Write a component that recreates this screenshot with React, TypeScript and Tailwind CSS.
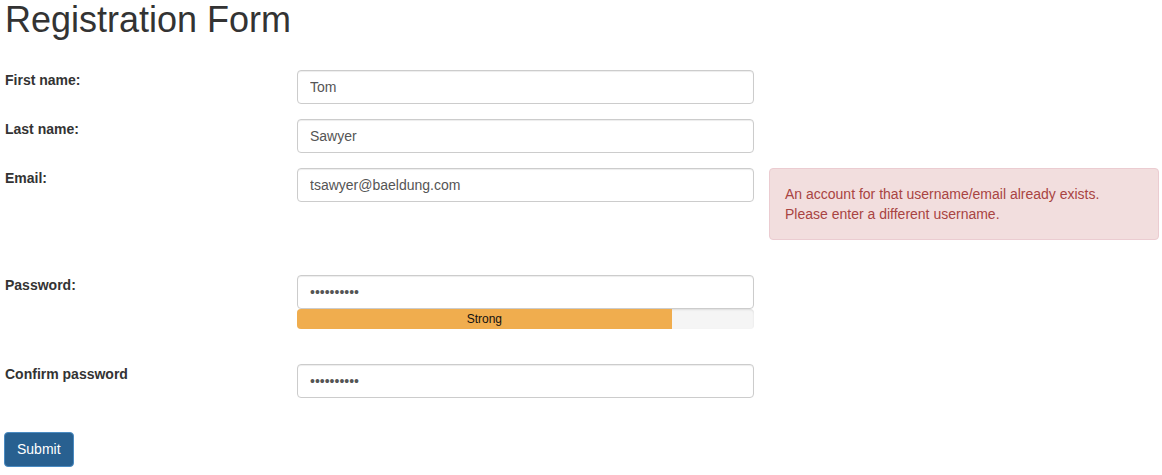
const inputClass =
  'block w-[457px] h-[34px] px-3 py-[6px] text-sm leading-5 text-[#555] bg-white border border-[#ccc] rounded shadow-[inset_0_1px_1px_rgba(0,0,0,0.075)]'

const Field = ({ label, value, type = 'text' }: { label: string; value: string; type?: string }) => (
  <div className="flex mb-[15px]">
    <label className="w-[293px] pl-px font-bold leading-5">{label}</label>
    <input className={inputClass} type={type} defaultValue={value} readOnly />
  </div>
)

export default function App() {
  return (
    <div className="bg-white text-[#333] text-sm leading-5 pl-1 min-h-[475px] font-['Liberation_Sans',Arial,sans-serif]">
      <h1 className="text-[36px] leading-[1.1] font-normal pl-px mb-[30px]">Registration Form</h1>

      <Field label="First name:" value="Tom" />
      <Field label="Last name:" value="Sawyer" />

      {/* Email with error */}
      <div className="flex mb-[15px]">
        <label className="w-[293px] pl-px font-bold leading-5">Email:</label>
        <input className={inputClass} type="text" defaultValue="tsawyer@baeldung.com" readOnly />
        <div className="ml-[15px] w-[390px] h-[72px] mb-5 p-[15px] bg-[#f2dede] border border-[#ebccd1] rounded text-[#a94442]">
          An account for that username/email already exists.
          <br />
          Please enter a different username.
        </div>
      </div>

      {/* Password with strength meter */}
      <div className="flex mb-[15px]">
        <label className="w-[293px] pl-px font-bold leading-5">Password:</label>
        <div>
          <input className={inputClass} type="password" defaultValue="0123456789" readOnly />
          <div className="w-[457px] h-5 mb-5 bg-[#f5f5f5] rounded overflow-hidden shadow-[inset_0_1px_2px_rgba(0,0,0,0.1)]">
            <div className="h-full w-[82%] bg-[#f0ad4e] text-xs leading-5 text-center text-[#111]">Strong</div>
          </div>
        </div>
      </div>

      <Field label="Confirm password" value="0123456789" type="password" />

      <button className="mt-[19px] h-[35px] px-3 text-sm leading-5 text-white bg-[#286090] border border-[#4a8bc2] rounded">
        Submit
      </button>
    </div>
  )
}
